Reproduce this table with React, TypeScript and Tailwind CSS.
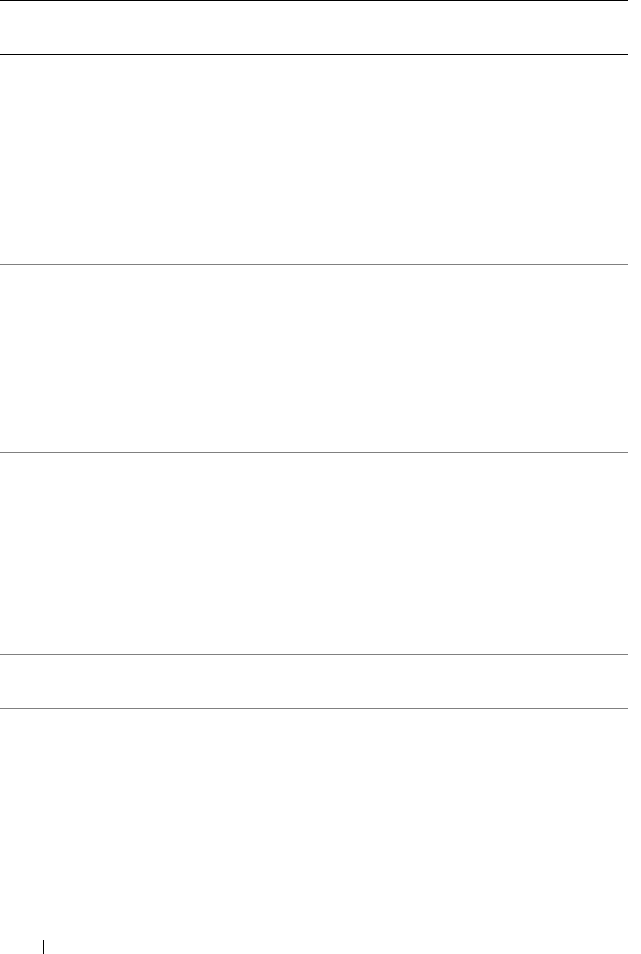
export default function App() {
  const rows = [
    { id: "r1", h: "h-[210px]" },
    { id: "r2", h: "h-[188px]" },
    { id: "r3", h: "h-[202px]" },
    { id: "r4", h: "h-[54px]" },
  ];

  return (
    <div className="w-[641px] h-[954px] bg-white overflow-hidden font-['Liberation_Sans',sans-serif]">
      {/* Table */}
      <div className="w-[628px]">
        {/* Header row */}
        <div className="h-[55px] border-y border-black"></div>
        {rows.map((row) => (
          <div key={row.id} className={`${row.h} border-b border-[#808080]`}></div>
        ))}
      </div>

      {/* Page footer mark */}
      <div className="mt-[231px] pl-[43px]">
        <div className="w-px h-[14px] bg-black"></div>
      </div>
    </div>
  );
}
